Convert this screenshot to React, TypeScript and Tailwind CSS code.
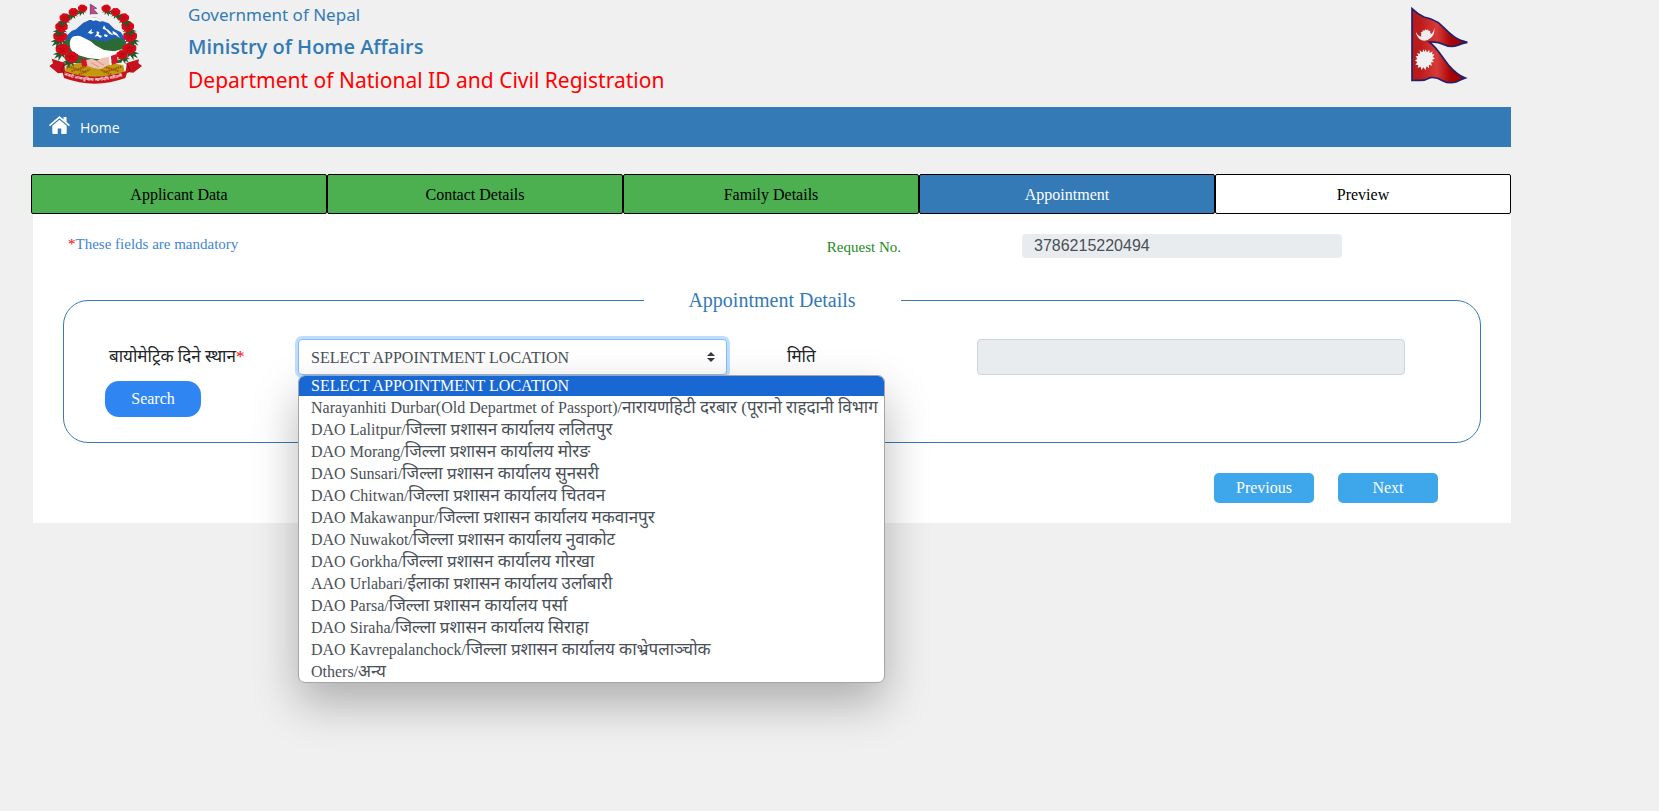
import React from "react";

const tabs = [
  { label: "Applicant Data", style: "bg-[#4caf50] text-black" },
  { label: "Contact Details", style: "bg-[#4caf50] text-black" },
  { label: "Family Details", style: "bg-[#4caf50] text-black" },
  { label: "Appointment", style: "bg-[#337ab7] text-white" },
  { label: "Preview", style: "bg-white text-black" },
];

const locations = [
  ["Narayanhiti Durbar(Old Departmet of Passport)/", "नारायणहिटी दरबार (पूरानो राहदानी विभाग"],
  ["DAO Lalitpur/", "जिल्ला प्रशासन कार्यालय ललितपुर"],
  ["DAO Morang/", "जिल्ला प्रशासन कार्यालय मोरङ"],
  ["DAO Sunsari/", "जिल्ला प्रशासन कार्यालय सुनसरी"],
  ["DAO Chitwan/", "जिल्ला प्रशासन कार्यालय चितवन"],
  ["DAO Makawanpur/", "जिल्ला प्रशासन कार्यालय मकवानपुर"],
  ["DAO Nuwakot/", "जिल्ला प्रशासन कार्यालय नुवाकोट"],
  ["DAO Gorkha/", "जिल्ला प्रशासन कार्यालय गोरखा"],
  ["AAO Urlabari/", "ईलाका प्रशासन कार्यालय उर्लाबारी"],
  ["DAO Parsa/", "जिल्ला प्रशासन कार्यालय पर्सा"],
  ["DAO Siraha/", "जिल्ला प्रशासन कार्यालय सिराहा"],
  ["DAO Kavrepalanchock/", "जिल्ला प्रशासन कार्यालय काभ्रेपलाञ्चोक"],
  ["Others/", "अन्य"],
];

// x, y, size, lean of the leaves (-1 left side of the wreath, 1 right side)
const flowers = [
  [276, 166, 0.9, 1], [125, 174, 1.1, -1], [298, 148, 1.1, 1], [98, 150, 1.1, -1],
  [300, 111, 1.1, 1], [91, 112, 1.1, -1], [293, 82, 1, 1], [95, 83, 1, -1],
  [280, 56, 0.9, 1], [106, 56, 0.9, -1], [256, 38, 0.8, 1], [131, 38, 0.8, -1],
  [228, 27, 0.75, 1], [158, 27, 0.75, -1],
];

function Flower({ x, y, size, lean }: { x: number; y: number; size: number; lean: number }) {
  return (
    <g transform={`translate(${x} ${y}) scale(${size * lean} ${size})`}>
      <path d="M10 4l17 8-11 1 7 11-12-6 1 12-10-14-8 8 2-12-12 2 12-10z" fill="#1f5a2c" />
      <path
        d="M-18-2q-2-9 6-10 4-7 12-5 9-3 13 4 8 3 6 11 1 8-7 9-4 8-12 6-8 3-11-5-8-2-7-10z"
        fill="#d60a18"
      />
      <path d="M-10-6l7 4 3-7 4 7 7-3M-8 5l8-3 8 4" stroke="#a8020e" strokeWidth="2" fill="none" />
    </g>
  );
}

function Emblem() {
  return (
    <svg viewBox="48 0 300 258" className="h-[86px] w-[100px]" role="img" aria-label="Emblem of Nepal">
      <path d="M104 112l22-20 12-4 22-20 14-6 14-10 14 2 16 10 18 6 18 18 18 8 14 20-4 18H110z" fill="#1f5fba" />
      <path
        d="M172 60l16-8 16 3 14 8-8 2-12-4-8 2-6-3zM178 94l8-8-2 9 8 3-10 4-8-4-10 10zM200 94l8 2-2 8 10 4-4 6-10-6-8 2 6-8zM222 76l6 10 8 4 14 16-12-4-10-12-10-4zM224 102l10 4-4 6-8-4zM248 92l12 8 10 14-12-8-10-4z"
        fill="#fff"
      />
      <path
        d="M96 124l22-6 20-2 38 6 12-4 20 6 22 0 22-10 20 2 16 10-2 28-12 34-78 8-66-8-20-34z"
        fill="#2b6a33"
      />
      <path
        d="M122 118q6-12 18-10 10-2 18 4l24 12 14 12 26 14 30 4 24-6q8 8 4 18-2 12-14 14l-18 4-40-6-34-4-28-8-14-6q-12-14-12-22-2-10 2-20z"
        fill="#fff"
      />
      <path d="M108 198q86-24 172-2l4 22q-86 34-180 0z" fill="#c29a10" />
      <path
        d="M116 200l54 18M124 214l44-14M146 224l34-16M274 200l-54 18M266 214l-44-14M244 224l-34-16"
        stroke="#a1590a"
        strokeWidth="6"
        strokeDasharray="5 2"
      />
      <path d="M168 180l18-4 14 6 16-8 22-4 4 22-16 8-14 8-22-4-22-8z" fill="#f0c0b0" />
      <path d="M184 188l24 14M202 184l20 12" stroke="#bf7f70" strokeWidth="2" />
      <path d="M152 178l16-2 4 22-16 2zM242 168l18-6 4 26-18 6z" fill="#d3152a" />
      <path d="M236 170l6-2 3 26-6 2z" fill="#fff" />
      {flowers.map(([x, y, size, lean]) => (
        <Flower key={`${x}-${y}`} x={x} y={y} size={size} lean={lean} />
      ))}
      <path d="M181 12v32" stroke="#38407f" strokeWidth="2" />
      <path d="M182 13l18 12-10 2 13 14h-21z" stroke="#413b98" strokeWidth="2" fill="#dc4468" />
      <path
        d="M65 176l38 12 2 26q88 32 182 0l4-26 36-10-2 11 11 9-26 20-18-2-6 18q-92 34-184 0l-4-16-14 2-26-22 11-8z"
        fill="#c5121d"
      />
      <path d="M104 190l-10 21 8 8M290 190l10 21-8 8" stroke="#860713" strokeWidth="3" fill="none" />
      <path id="motto" d="M102 225q92 36 190-1" fill="none" />
      <text fill="#fff" fontSize="13" fontFamily="Noto Sans, sans-serif" fontWeight="600">
        <textPath href="#motto">जननी जन्मभूमिश्च स्वर्गादपि गरीयसी</textPath>
      </text>
    </svg>
  );
}

function Flag() {
  return (
    <svg viewBox="87 18 183 240" className="h-[80px] w-[61px]" role="img" aria-label="Flag of Nepal">
      <defs>
        <linearGradient id="cloth">
          <stop offset="0" stopColor="#b31c1c" />
          <stop offset=".15" stopColor="#bd1b1b" />
          <stop offset=".45" stopColor="#d83a3a" />
          <stop offset=".7" stopColor="#a80505" />
          <stop offset="1" stopColor="#9b0000" />
        </linearGradient>
      </defs>
      <path
        d="M96 26Q112 42 132 51Q155 55 174 67C196 84 212 110 242 121L262 127Q244 130 234 136Q212 144 193 134Q174 124 148 126C168 140 180 162 206 196Q232 226 256 234Q240 240 228 246Q206 252 188 242Q168 230 150 233Q134 242 118 241L96 241z"
        fill="url(#cloth)"
        stroke="#20206e"
        strokeWidth="5"
      />
      <path
        d="M107 94q5 14 17 16-2-6 0-10l-2-3 5-1 1-5 5 1 3-4 4 3 4-3 2 5 5-1-1 5 3 4-2 3q10-6 12-20 2 20-10 29-14 13-30 7-14-8-16-26z"
        fill="#eee"
      />
      <polygon
        points="137,148 141,157 148,149 149,159 158,154 156,163 164,163 158,170 165,176 156,179 162,187 153,187 156,197 147,194 147,205 140,199 136,211 131,202 124,210 122,200 113,204 115,195 106,194 112,187 105,181 112,177 107,169 115,168 111,159 120,161 119,151 127,157 131,148 134,156"
        fill="#f0f0f0"
      />
    </svg>
  );
}

export default function App() {
  return (
    <div className="min-h-screen bg-[#f0f0f0] pb-10 pl-[33px] pr-[148px] font-['Liberation_Serif','Noto_Sans',serif] text-base text-[#212529]">
      <header className="flex h-[107px] items-start justify-between pl-[13px] pr-[41px]">
        <div className="flex gap-[42px]">
          <Emblem />
          <div className="font-['Noto_Sans',sans-serif] text-[#337ab7]">
            <p className="text-[17px] leading-[30px]">Government of Nepal</p>
            <p className="font-['Open_Sans',sans-serif] text-[20px] font-semibold leading-[34px]">
              Ministry of Home Affairs
            </p>
            <h1 className="text-[21px] leading-8 text-[#ff0000]">
              Department of National ID and Civil Registration
            </h1>
          </div>
        </div>
        <div className="pt-[6px]">
          <Flag />
        </div>
      </header>

      <nav className="flex h-10 items-center bg-[#337ab7] px-4">
        <a href="#home" className="flex items-center gap-[10px] font-['Open_Sans',sans-serif] text-[14px] text-white">
          <svg viewBox="0 0 21 18" className="mb-1 h-[18px] w-[21px]" fill="currentColor" aria-hidden="true">
            <path d="M10.500 0L0 9l1 1.200 9.500-8 9.500 8L21 9l-3.500-3V1h-3v2.400z" />
            <path d="M10.500 3.700L3.300 9.800V17q0 1 1 1h4.400v-5.500h3.600V18h4.400q1 0 1-1V9.800z" />
          </svg>
          Home
        </a>
      </nav>

      <main className="mt-[27px] bg-white pb-5">
        <div className="-ml-[2px] grid grid-cols-5">
          {tabs.map((tab) => (
            <button
              key={tab.label}
              type="button"
              className={`h-10 rounded-[2px] border border-black pt-[2px] text-[16px] ${tab.style}`}
            >
              {tab.label}
            </button>
          ))}
        </div>

        <div className="flex items-start justify-between pl-[35px] pr-[169px] pt-5">
          <p className="text-[15px] leading-5 text-[#3f85d6]">
            <span className="text-[#ff0000]">*</span>These fields are mandatory
          </p>
          <div className="flex items-center gap-[121px]">
            <label htmlFor="request" className="pt-[2px] text-[15px] leading-5 text-[#228b22]">
              Request No.
            </label>
            <input
              id="request"
              readOnly
              value="3786215220494"
              className="h-6 w-[320px] rounded-[4px] bg-[#e9ecef] px-3 font-['Liberation_Sans',sans-serif] text-[16px] text-[#495057]"
            />
          </div>
        </div>

        <fieldset className="mx-[30px] mt-[27px] h-[158px] rounded-[25px] border border-[#337ab7]">
          <legend className="mx-auto w-[257px] text-center text-[20px] leading-[30px] text-[#337ab7]">
            Appointment Details
          </legend>
          <div className="pl-[45px] pr-[75px]">
            <div className="grid grid-cols-[189fr_429fr_250fr_428fr] pt-6">
              <label htmlFor="location" className="pt-1 text-[17px] leading-7">
                बायोमेट्रिक दिने स्थान<span className="text-[#ff0000]">*</span>
              </label>
              <div className="relative">
                <select
                  id="location"
                  className="block h-9 w-full appearance-none rounded-[4px] border border-[#80bdff] bg-white px-3 pt-[2px] text-[16px] text-[#495057] shadow-[0_0_0_3px_#bfdeff] outline-none"
                >
                  <option>SELECT APPOINTMENT LOCATION</option>
                </select>
                <svg
                  viewBox="0 0 8 10"
                  className="pointer-events-none absolute right-3 top-[13px] h-[10px] w-2"
                  fill="#343a40"
                  aria-hidden="true"
                >
                  <path d="M4 0l4 4H0zM4 10l4-4H0z" />
                </svg>
                <ul
                  role="listbox"
                  aria-label="Appointment location"
                  className="absolute left-0 top-full z-10 w-[587px] overflow-hidden rounded-[7px] border border-[#a3a5a7] bg-white text-[16px] text-[#495057] shadow-[0_20px_46px_rgba(0,0,0,0.28)]"
                >
                  <li role="option" aria-selected="true" className="h-5 bg-[#1967d2] px-3 leading-5 text-white">
                    SELECT APPOINTMENT LOCATION
                  </li>
                  {locations.map(([english, nepali]) => (
                    <li
                      key={english}
                      role="option"
                      aria-selected="false"
                      className="h-[22px] whitespace-nowrap pl-3 leading-6"
                    >
                      {english}
                      <span className="text-[17px]">{nepali}</span>
                    </li>
                  ))}
                </ul>
              </div>
              <label htmlFor="date" className="pl-[60px] pt-1 text-[17px] leading-7">
                मिति
              </label>
              <input
                id="date"
                disabled
                className="h-9 w-full rounded-[4px] border border-[#ced4da] bg-[#e9ecef]"
              />
            </div>
            <button
              type="button"
              className="-ml-1 mt-[6px] h-9 w-24 rounded-[14px] bg-[#2f86f3] text-[16px] text-white"
            >
              Search
            </button>
          </div>
        </fieldset>

        <div className="mt-[30px] flex justify-end gap-6 pr-[73px]">
          <button type="button" className="h-[30px] w-[100px] rounded-[5px] bg-[#3ea6ea] text-[16px] text-white">
            Previous
          </button>
          <button type="button" className="h-[30px] w-[100px] rounded-[5px] bg-[#3ea6ea] text-[16px] text-white">
            Next
          </button>
        </div>
      </main>
    </div>
  );
}
